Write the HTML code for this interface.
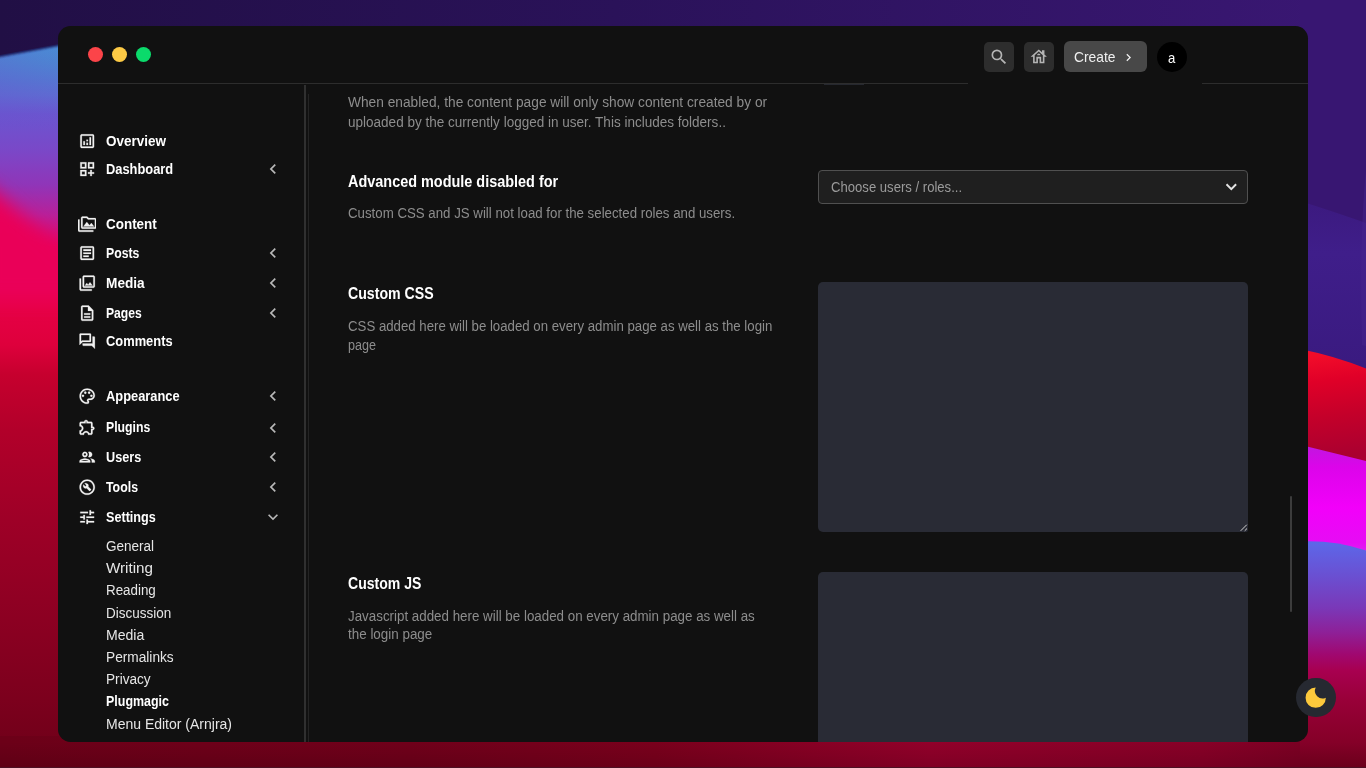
<!DOCTYPE html>
<html lang="en">
<head>
<meta charset="utf-8">
<title>Plugmagic Settings</title>
<style>
html,body{margin:0;padding:0;width:1366px;height:768px;overflow:hidden;background:#7a0020;}
body{position:relative;font-family:"Liberation Sans",sans-serif;}
#bg{position:absolute;left:0;top:0;width:1366px;height:768px;display:block;}
#win{position:absolute;left:58px;top:26px;width:1250px;height:716px;background:#111111;border-radius:12.500px;overflow:hidden;}
#page{position:absolute;left:-58px;top:-26px;width:1366px;height:768px;}
.abs{position:absolute;}
.t{position:absolute;white-space:nowrap;line-height:20px;height:20px;transform-origin:0 50%;display:block;}
.ic{position:absolute;display:block;}
.dot{position:absolute;width:15.4px;height:15.4px;border-radius:50%;top:46.8px;}
.btn{position:absolute;border-radius:5px;}
.ta{position:absolute;left:818px;width:430px;background:#292b35;border-radius:5px;}
</style>
</head>
<body>
<svg id="bg" width="1366" height="768" viewBox="0 0 1366 768">
<defs>
<linearGradient id="gl" x1="0" y1="0" x2="0" y2="768" gradientUnits="userSpaceOnUse">
<stop offset="0.058" stop-color="#4890d6"/><stop offset="0.081" stop-color="#4c86d2"/><stop offset="0.104" stop-color="#5478d2"/><stop offset="0.124" stop-color="#5e6cd2"/><stop offset="0.148" stop-color="#6a56d0"/>
<stop offset="0.195" stop-color="#7a48c8"/><stop offset="0.241" stop-color="#9035b8"/><stop offset="0.28" stop-color="#b8209a"/>
<stop offset="0.322" stop-color="#e80060"/><stop offset="0.39" stop-color="#e80048"/><stop offset="0.449" stop-color="#de003c"/>
<stop offset="0.488" stop-color="#c6002e"/><stop offset="0.56" stop-color="#b2002a"/><stop offset="0.677" stop-color="#9e0027"/>
<stop offset="0.807" stop-color="#8c0022"/><stop offset="0.911" stop-color="#7c001d"/><stop offset="1" stop-color="#6c0018"/>
</linearGradient>
<linearGradient id="gt" x1="0" y1="0" x2="1366" y2="0" gradientUnits="userSpaceOnUse">
<stop offset="0" stop-color="#210f45"/><stop offset="0.45" stop-color="#2a1259"/><stop offset="1" stop-color="#3a1774"/>
</linearGradient>
<linearGradient id="gr1" x1="1330" y1="354" x2="1343" y2="456" gradientUnits="userSpaceOnUse">
<stop offset="0" stop-color="#f20c2a"/><stop offset="0.25" stop-color="#e00028"/><stop offset="0.6" stop-color="#c4002a"/><stop offset="1" stop-color="#aa0030"/>
</linearGradient>
<linearGradient id="gr2" x1="0" y1="444" x2="0" y2="560" gradientUnits="userSpaceOnUse">
<stop offset="0" stop-color="#be18de"/><stop offset="0.2" stop-color="#dc04ea"/><stop offset="0.55" stop-color="#f200fa"/><stop offset="0.85" stop-color="#e60cf4"/><stop offset="1" stop-color="#d830f0"/>
</linearGradient>
<linearGradient id="gr3" x1="0" y1="536" x2="0" y2="768" gradientUnits="userSpaceOnUse">
<stop offset="0.02" stop-color="#5c68ea"/><stop offset="0.17" stop-color="#6a50d2"/><stop offset="0.31" stop-color="#7a38b8"/><stop offset="0.415" stop-color="#8e2098"/>
<stop offset="0.51" stop-color="#a00870"/><stop offset="0.58" stop-color="#a80050"/><stop offset="0.71" stop-color="#980038"/><stop offset="0.84" stop-color="#8a002c"/><stop offset="1" stop-color="#7a001f"/>
</linearGradient>
<linearGradient id="gb" x1="0" y1="0" x2="1366" y2="0" gradientUnits="userSpaceOnUse">
<stop offset="0" stop-color="#6c0018"/><stop offset="0.3" stop-color="#70001a"/><stop offset="0.48" stop-color="#7a001c"/><stop offset="0.68" stop-color="#92002a"/><stop offset="0.88" stop-color="#880027"/><stop offset="1" stop-color="#740020"/>
</linearGradient>
<linearGradient id="gbl" x1="0" y1="0" x2="80" y2="0" gradientUnits="userSpaceOnUse">
<stop offset="0" stop-color="#6a50cc" stop-opacity="0.22"/><stop offset="1" stop-color="#6a50cc" stop-opacity="0"/>
</linearGradient>
<linearGradient id="gp" x1="0" y1="205" x2="0" y2="365" gradientUnits="userSpaceOnUse"><stop offset="0" stop-color="#3c1a80"/><stop offset="0.3" stop-color="#3f1e8a"/><stop offset="1" stop-color="#3a1a80"/></linearGradient>
<linearGradient id="gbd" x1="0" y1="742" x2="0" y2="768" gradientUnits="userSpaceOnUse"><stop offset="0" stop-color="#000" stop-opacity="0"/><stop offset="1" stop-color="#000" stop-opacity="0.13"/></linearGradient>
<filter id="bl" x="-50%" y="-50%" width="200%" height="200%"><feGaussianBlur stdDeviation="9"/></filter>
<filter id="bl2" x="-10%" y="-50%" width="120%" height="200%"><feGaussianBlur stdDeviation="1.100"/></filter>
</defs>
<rect x="0" y="0" width="1366" height="768" fill="url(#gl)"/>
<rect x="0" y="40" width="80" height="90" fill="url(#gbl)"/>
<polygon points="-20,178 -20,300 90,300 90,274" fill="#ea0058" filter="url(#bl)"/>
<rect x="0" y="736" width="1366" height="32" fill="url(#gb)"/>
<polygon points="-10,-10 1376,-10 1376,40 80,40 -10,57" fill="#1d1a5a" filter="url(#bl2)" transform="translate(0,2)"/>
<polygon points="0,0 1366,0 1366,40 80,40 0,55" fill="url(#gt)"/>
<rect x="1300" y="0" width="66" height="768" fill="#381672"/>
<path d="M1300,201 Q1335,212 1366,223 L1366,372 L1300,372 Z" fill="url(#gp)"/>
<path d="M1366,170 Q1359,240 1362,345 L1366,346 Z" fill="#46268e" opacity="0.450"/>
<path d="M1300,349 Q1335,356 1366,368.500 L1366,462 L1300,445 Z" fill="url(#gr1)"/>
<polygon points="1300,444.700 1366,461 1366,570 1300,570" fill="url(#gr2)"/>
<path d="M1300,541.500 Q1335,540 1366,550.600 L1366,768 L1300,768 Z" fill="url(#gr3)"/>
<rect x="0" y="742" width="1366" height="26" fill="url(#gbd)"/>
<rect x="0" y="767" width="1366" height="1" fill="#4e1024"/>
</svg>

<div id="win"><div id="page">
<!-- header -->
<div class="abs" style="left:58px;top:83px;width:1250px;height:1px;background:#2d2d2d"></div>
<div class="abs" style="left:968px;top:80px;width:234px;height:8px;background:#111111"></div>
<div class="dot" style="left:87.8px;background:#fb4449"></div>
<div class="dot" style="left:111.8px;background:#fdca45"></div>
<div class="dot" style="left:135.8px;background:#0bda6b"></div>
<div class="btn" style="left:984px;top:42px;width:30px;height:30px;background:#2d2d2d"></div>
<div class="btn" style="left:1024px;top:42px;width:30px;height:30px;background:#2d2d2d"></div>
<div class="btn" style="left:1064px;top:41px;width:83px;height:31px;background:#484848;border-radius:6px"></div>
<div class="abs" style="left:1157px;top:42px;width:30px;height:30px;border-radius:50%;background:#000"></div>
<svg class="ic" style="left:988.60px;top:46.90px;width:20px;height:20px;fill:#b4b4b4;" viewBox="0 0 24 24"><path d="M15.500 14h-.79l-.28-.27A6.471 6.471 0 0 0 16 9.500 6.500 6.500 0 1 0 9.500 16c1.610 0 3.090-.59 4.230-1.570l.27.280v.79l5 4.990L20.490 19l-4.990-5zm-6 0C7.010 14 5 11.990 5 9.500S7.010 5 9.500 5 14 7.010 14 9.500 11.990 14 9.500 14z"/></svg>
<svg class="ic" style="left:1029.25px;top:46.85px;width:19.5px;height:19.5px;fill:#b4b4b4;" viewBox="0 0 24 24"><path d="M19 9.300V4h-3v2.600L12 3 2 12h3v8h6v-6h2v6h6v-8h3l-3-2.700zM17 18h-2v-6H9v6H7v-7.810l5-4.500 5 4.500V18z"/><path d="M10 10h4c0-1.100-.9-2-2-2s-2 .9-2 2z"/></svg>
<svg class="ic" style="left:1121.30px;top:49.70px;width:15px;height:15px;fill:#f0f0f0;" viewBox="0 0 24 24"><path d="M10 6L8.590 7.410 13.170 12l-4.580 4.590L10 18l6-6z"/></svg>
<div class="abs" style="left:824px;top:84px;width:40px;height:1px;background:#26282f"></div>
<!-- sidebar -->
<div class="abs" style="left:304px;top:85px;width:2px;height:660px;background:#303030"></div>
<div class="abs" style="left:308px;top:94px;width:1px;height:650px;background:#242424"></div>
<svg class="ic" style="left:77.90px;top:131.60px;width:18.4px;height:18.4px;fill:#f2f2f2;stroke:#f2f2f2;stroke-width:.3;" viewBox="0 0 24 24"><path d="M19 3H5c-1.1 0-2 .9-2 2v14c0 1.1.9 2 2 2h14c1.1 0 2-.9 2-2V5c0-1.1-.9-2-2-2zm0 16H5V5h14v14zM7 12h2v5H7zm8-5h2v10h-2zm-4 7h2v3h-2zm0-4h2v2h-2z"/></svg><svg class="ic" style="left:77.90px;top:160.00px;width:18.4px;height:18.4px;fill:#f2f2f2;stroke:#f2f2f2;stroke-width:.3;" viewBox="0 0 24 24"><path d="M3 11h8V3H3v8zm2-6h4v4H5V5zm8-2v8h8V3h-8zm6 6h-4V5h4v4zM3 21h8v-8H3v8zm2-6h4v4H5v-4zm13-2h-2v3h-3v2h3v3h2v-3h3v-2h-3z"/></svg><svg class="ic" style="left:263.30px;top:159.40px;width:20px;height:20px;fill:#b8b8b8;" viewBox="0 0 24 24"><path d="M15.410 7.410L14 6l-6 6 6 6 1.410-1.410L10.830 12z"/></svg><svg class="ic" style="left:77.90px;top:214.70px;width:18.4px;height:18.4px;fill:#f2f2f2;stroke:#f2f2f2;stroke-width:.3;" viewBox="0 0 24 24"><path d="M2 6H0v5h.01L0 20c0 1.1.9 2 2 2h18v-2H2V6zm5 9h14l-3.5-4.5-2.5 3.01L11.5 9zM22 4h-8l-2-2H6c-1.1 0-1.99.9-1.99 2L4 16c0 1.1.9 2 2 2h16c1.1 0 2-.9 2-2V6c0-1.1-.9-2-2-2zm0 12H6V4h5.17l1.41 1.41.59.59H22v10z"/></svg><svg class="ic" style="left:77.90px;top:243.80px;width:18.4px;height:18.4px;fill:#f2f2f2;stroke:#f2f2f2;stroke-width:.3;" viewBox="0 0 24 24"><path d="M19 5v14H5V5h14m0-2H5c-1.1 0-2 .9-2 2v14c0 1.1.9 2 2 2h14c1.1 0 2-.9 2-2V5c0-1.1-.9-2-2-2z"/><path d="M14 17H7v-2h7v2zm3-4H7v-2h10v2zm0-4H7V7h10v2z"/></svg><svg class="ic" style="left:263.30px;top:243.20px;width:20px;height:20px;fill:#b8b8b8;" viewBox="0 0 24 24"><path d="M15.410 7.410L14 6l-6 6 6 6 1.410-1.410L10.830 12z"/></svg><svg class="ic" style="left:77.90px;top:273.80px;width:18.4px;height:18.4px;fill:#f2f2f2;stroke:#f2f2f2;stroke-width:.3;" viewBox="0 0 24 24"><path d="M20 4v12H8V4h12m0-2H8c-1.1 0-2 .9-2 2v12c0 1.1.9 2 2 2h12c1.1 0 2-.9 2-2V4c0-1.1-.9-2-2-2zm-8.5 9.670l1.690 2.260 2.480-3.100L19 15H9zM2 6v14c0 1.100.9 2 2 2h14v-2H4V6H2z"/></svg><svg class="ic" style="left:263.30px;top:273.20px;width:20px;height:20px;fill:#b8b8b8;" viewBox="0 0 24 24"><path d="M15.410 7.410L14 6l-6 6 6 6 1.410-1.410L10.830 12z"/></svg><svg class="ic" style="left:77.90px;top:303.60px;width:18.4px;height:18.4px;fill:#f2f2f2;stroke:#f2f2f2;stroke-width:.3;" viewBox="0 0 24 24"><path d="M8 16h8v2H8zm0-4h8v2H8zm6-10H6c-1.1 0-2 .9-2 2v16c0 1.100.89 2 1.990 2H18c1.100 0 2-.9 2-2V8l-6-6zm4 18H6V4h7v5h5v11z"/></svg><svg class="ic" style="left:263.30px;top:303.00px;width:20px;height:20px;fill:#b8b8b8;" viewBox="0 0 24 24"><path d="M15.410 7.410L14 6l-6 6 6 6 1.410-1.410L10.830 12z"/></svg><svg class="ic" style="left:77.90px;top:331.80px;width:18.4px;height:18.4px;fill:#f2f2f2;stroke:#f2f2f2;stroke-width:.3;" viewBox="0 0 24 24"><path d="M15 4v7H5.170L4 12.170V4h11m1-2H3c-.55 0-1 .45-1 1v14l4-4h10c.55 0 1-.45 1-1V3c0-.55-.45-1-1-1zm5 4h-2v9H6v2c0 .55.45 1 1 1h11l4 4V7c0-.55-.45-1-1-1z"/></svg><svg class="ic" style="left:77.90px;top:386.80px;width:18.4px;height:18.4px;fill:#f2f2f2;stroke:#f2f2f2;stroke-width:.3;" viewBox="0 0 24 24"><path d="M12 22C6.490 22 2 17.510 2 12S6.490 2 12 2s10 4.040 10 9c0 3.310-2.690 6-6 6h-1.770c-.28 0-.5.220-.5.5 0 .120.050.230.130.330.410.470.640 1.060.640 1.670A2.500 2.500 0 0 1 12 22zm0-18c-4.410 0-8 3.590-8 8s3.590 8 8 8c.28 0 .5-.220.5-.5a.54.54 0 0 0-.14-.35c-.41-.46-.63-1.050-.63-1.650a2.500 2.500 0 0 1 2.500-2.500H16c2.210 0 4-1.790 4-4 0-3.860-3.590-7-8-7z"/><circle cx="6.500" cy="11.500" r="1.500"/><circle cx="9.500" cy="7.500" r="1.500"/><circle cx="14.500" cy="7.500" r="1.500"/><circle cx="17.500" cy="11.500" r="1.500"/></svg><svg class="ic" style="left:263.30px;top:386.20px;width:20px;height:20px;fill:#b8b8b8;" viewBox="0 0 24 24"><path d="M15.410 7.410L14 6l-6 6 6 6 1.410-1.410L10.830 12z"/></svg><svg class="ic" style="left:77.90px;top:418.10px;width:18.4px;height:18.4px;fill:#f2f2f2;stroke:#f2f2f2;stroke-width:.3;" viewBox="0 0 24 24"><path d="M10.500 4.500c.28 0 .5.220.5.5v2h6v6h2c.28 0 .5.220.5.5s-.22.5-.5.5h-2v6h-2.120c-.68-1.750-2.390-3-4.380-3s-3.700 1.250-4.380 3H4v-2.120c1.750-.68 3-2.390 3-4.380 0-1.990-1.240-3.700-2.990-4.380L4 7h6V5c0-.28.220-.5.5-.5m0-2C9.120 2.500 8 3.620 8 5H4c-1.100 0-1.990.9-1.990 2v3.800h.29c1.490 0 2.700 1.210 2.700 2.700s-1.210 2.700-2.700 2.700H2V20c0 1.100.9 2 2 2h3.800v-.3c0-1.490 1.210-2.700 2.700-2.700s2.700 1.210 2.700 2.700v.3H17c1.100 0 2-.9 2-2v-4c1.380 0 2.500-1.120 2.500-2.500S20.380 11 19 11V7c0-1.100-.9-2-2-2h-4c0-1.380-1.120-2.500-2.500-2.500z"/></svg><svg class="ic" style="left:263.30px;top:417.50px;width:20px;height:20px;fill:#b8b8b8;" viewBox="0 0 24 24"><path d="M15.410 7.410L14 6l-6 6 6 6 1.410-1.410L10.830 12z"/></svg><svg class="ic" style="left:77.90px;top:448.00px;width:18.4px;height:18.4px;fill:#f2f2f2;stroke:#f2f2f2;stroke-width:.3;" viewBox="0 0 24 24"><path d="M9 13.750c-2.340 0-7 1.170-7 3.500V19h14v-1.750c0-2.330-4.660-3.500-7-3.500zM4.340 17c.84-.58 2.870-1.250 4.660-1.250s3.820.67 4.660 1.250H4.340zM9 12c1.930 0 3.500-1.570 3.500-3.500S10.930 5 9 5 5.500 6.570 5.500 8.500 7.070 12 9 12zm0-5c.83 0 1.500.67 1.500 1.500S9.830 10 9 10s-1.500-.67-1.500-1.500S8.170 7 9 7zm7.040 6.810c1.160.84 1.960 1.960 1.960 3.440V19h4v-1.750c0-2.020-3.500-3.170-5.960-3.440zM15 12c1.930 0 3.500-1.570 3.500-3.500S16.930 5 15 5c-.54 0-1.040.13-1.500.35.63.89 1 1.980 1 3.150s-.37 2.260-1 3.150c.46.220.96.350 1.500.350z"/></svg><svg class="ic" style="left:263.30px;top:447.40px;width:20px;height:20px;fill:#b8b8b8;" viewBox="0 0 24 24"><path d="M15.410 7.410L14 6l-6 6 6 6 1.410-1.410L10.830 12z"/></svg><svg class="ic" style="left:77.90px;top:478.00px;width:18.4px;height:18.4px;fill:#f2f2f2;stroke:#f2f2f2;stroke-width:.3;" viewBox="0 0 24 24"><path d="M12 2C6.480 2 2 6.480 2 12s4.480 10 10 10 10-4.480 10-10S17.520 2 12 2zm0 18c-4.410 0-8-3.590-8-8s3.590-8 8-8 8 3.590 8 8-3.590 8-8 8z"/><path d="M13.490 11.380c.43-1.220.17-2.640-.81-3.620-1.110-1.110-2.790-1.300-4.100-.59l2.350 2.350-1.410 1.410-2.350-2.350c-.71 1.320-.52 2.990.59 4.100.98.980 2.400 1.240 3.620.81l3.410 3.410c.2.200.51.200.71 0l1.400-1.400c.2-.2.200-.51 0-.71l-3.410-3.410z"/></svg><svg class="ic" style="left:263.30px;top:477.40px;width:20px;height:20px;fill:#b8b8b8;" viewBox="0 0 24 24"><path d="M15.410 7.410L14 6l-6 6 6 6 1.410-1.410L10.830 12z"/></svg><svg class="ic" style="left:77.90px;top:508.00px;width:18.4px;height:18.4px;fill:#f2f2f2;stroke:#f2f2f2;stroke-width:.3;" viewBox="0 0 24 24"><path d="M3 17v2h6v-2H3zM3 5v2h10V5H3zm10 16v-2h8v-2h-8v-2h-2v6h2zM7 9v2H3v2h4v2h2V9H7zm14 4v-2H11v2h10zm-6-4h2V7h4V5h-4V3h-2v6z"/></svg><svg class="ic" style="left:263.20px;top:506.60px;width:20px;height:20px;fill:#b8b8b8;" viewBox="0 0 24 24"><path d="M16.590 8.590L12 13.170 7.410 8.590 6 10l6 6 6-6z"/></svg>
<!-- main -->
<div class="abs" style="left:818px;top:170px;width:428px;height:32px;border:1px solid #505050;background:#1f1f1f;border-radius:4px"></div>
<svg class="ic" style="left:1223px;top:179px;width:16px;height:16px" viewBox="0 0 16 16"><path d="M3.500 5.300 L8.300 10.100 L13.100 5.300" fill="none" stroke="#e2e2e2" stroke-width="2"/></svg>
<div class="ta" style="top:282px;height:250px;border-radius:5px 5px 2px 5px"></div>
<svg class="ic" style="left:1236px;top:520px;width:12px;height:12px" viewBox="0 0 12 12"><path d="M10.800 4.700L4.700 10.800M11 8.500L8.700 10.800" stroke="#d4d4d4" stroke-width="1" fill="none"/></svg>
<div class="ta" style="top:572px;height:200px"></div>
<div class="abs" style="left:1290px;top:496px;width:2px;height:116px;background:#3c3c3c;border-radius:1px"></div>
<span id="t0" class="t" style="left:106.2px;top:130.74px;font-size:14.6px;font-weight:700;color:#ffffff;transform:scaleX(0.9260)">Overview</span><span id="t1" class="t" style="left:106.2px;top:158.94px;font-size:14.6px;font-weight:700;color:#ffffff;transform:scaleX(0.8815)">Dashboard</span><span id="t2" class="t" style="left:106.2px;top:213.94px;font-size:14.6px;font-weight:700;color:#ffffff;transform:scaleX(0.9215)">Content</span><span id="t3" class="t" style="left:106.2px;top:242.94px;font-size:14.6px;font-weight:700;color:#ffffff;transform:scaleX(0.8403)">Posts</span><span id="t4" class="t" style="left:106.2px;top:272.84px;font-size:14.6px;font-weight:700;color:#ffffff;transform:scaleX(0.9357)">Media</span><span id="t5" class="t" style="left:106.2px;top:302.64px;font-size:14.6px;font-weight:700;color:#ffffff;transform:scaleX(0.8326)">Pages</span><span id="t6" class="t" style="left:106.2px;top:330.84px;font-size:14.6px;font-weight:700;color:#ffffff;transform:scaleX(0.8830)">Comments</span><span id="t7" class="t" style="left:106.2px;top:385.94px;font-size:14.6px;font-weight:700;color:#ffffff;transform:scaleX(0.8809)">Appearance</span><span id="t8" class="t" style="left:106.2px;top:416.74px;font-size:14.6px;font-weight:700;color:#ffffff;transform:scaleX(0.8406)">Plugins</span><span id="t9" class="t" style="left:106.2px;top:446.74px;font-size:14.6px;font-weight:700;color:#ffffff;transform:scaleX(0.8699)">Users</span><span id="t10" class="t" style="left:106.2px;top:476.74px;font-size:14.6px;font-weight:700;color:#ffffff;transform:scaleX(0.8456)">Tools</span><span id="t11" class="t" style="left:106.2px;top:506.74px;font-size:14.6px;font-weight:700;color:#ffffff;transform:scaleX(0.8649)">Settings</span><span id="t12" class="t" style="left:106.3px;top:536.15px;font-size:14px;font-weight:400;color:#e6e6e6;transform:scaleX(0.9656)">General</span><span id="t13" class="t" style="left:106.3px;top:557.95px;font-size:14px;font-weight:400;color:#e6e6e6;transform:scaleX(1.0851)">Writing</span><span id="t14" class="t" style="left:106.3px;top:580.45px;font-size:14px;font-weight:400;color:#e6e6e6;transform:scaleX(0.9548)">Reading</span><span id="t15" class="t" style="left:106.3px;top:602.75px;font-size:14px;font-weight:400;color:#e6e6e6;transform:scaleX(0.9630)">Discussion</span><span id="t16" class="t" style="left:106.3px;top:624.75px;font-size:14px;font-weight:400;color:#e6e6e6;transform:scaleX(1.0042)">Media</span><span id="t17" class="t" style="left:106.3px;top:646.85px;font-size:14px;font-weight:400;color:#e6e6e6;transform:scaleX(0.9776)">Permalinks</span><span id="t18" class="t" style="left:106.3px;top:668.75px;font-size:14px;font-weight:400;color:#e6e6e6;transform:scaleX(0.9737)">Privacy</span><span id="t19" class="t" style="left:106.3px;top:691.05px;font-size:14px;font-weight:700;color:#ffffff;transform:scaleX(0.8899)">Plugmagic</span><span id="t20" class="t" style="left:106.3px;top:713.75px;font-size:14px;font-weight:400;color:#e6e6e6;transform:scaleX(0.9996)">Menu Editor (Arnjra)</span><span id="t21" class="t" style="left:348.2px;top:91.55px;font-size:14px;font-weight:400;color:#8d8d8d;transform:scaleX(0.9809)">When enabled, the content page will only show content created by or</span><span id="t22" class="t" style="left:348.2px;top:111.75px;font-size:14px;font-weight:400;color:#8d8d8d;transform:scaleX(0.9660)">uploaded by the currently logged in user. This includes folders..</span><span id="t23" class="t" style="left:348.2px;top:172.26px;font-size:16px;font-weight:700;color:#ffffff;transform:scaleX(0.9024)">Advanced module disabled for</span><span id="t24" class="t" style="left:348.2px;top:202.95px;font-size:14px;font-weight:400;color:#8d8d8d;transform:scaleX(0.9475)">Custom CSS and JS will not load for the selected roles and users.</span><span id="t25" class="t" style="left:348.2px;top:284.26px;font-size:16px;font-weight:700;color:#ffffff;transform:scaleX(0.8844)">Custom CSS</span><span id="t26" class="t" style="left:348.2px;top:315.85px;font-size:14px;font-weight:400;color:#8d8d8d;transform:scaleX(0.9449)">CSS added here will be loaded on every admin page as well as the login</span><span id="t27" class="t" style="left:348.2px;top:334.55px;font-size:14px;font-weight:400;color:#8d8d8d;transform:scaleX(0.8987)">page</span><span id="t28" class="t" style="left:348.2px;top:574.26px;font-size:16px;font-weight:700;color:#ffffff;transform:scaleX(0.8770)">Custom JS</span><span id="t29" class="t" style="left:348.2px;top:605.85px;font-size:14px;font-weight:400;color:#8d8d8d;transform:scaleX(0.9538)">Javascript added here will be loaded on every admin page as well as</span><span id="t30" class="t" style="left:348.2px;top:624.15px;font-size:14px;font-weight:400;color:#8d8d8d;transform:scaleX(0.9583)">the login page</span><span id="t31" class="t" style="left:831.4px;top:177.45px;font-size:14px;font-weight:400;color:#9b9b9b;transform:scaleX(0.9360)">Choose users / roles...</span><span id="t32" class="t" style="left:1074.0px;top:46.74px;font-size:14.6px;font-weight:400;color:#f0f0f0;transform:scaleX(0.9472)">Create</span><span id="t33" class="t" style="left:1168.3px;top:47.60px;font-size:15px;font-weight:400;color:#ffffff;transform:scaleX(0.8749)">a</span>
</div></div>
<div class="abs" style="left:1296.200px;top:678px;width:39.400px;height:39.400px;border-radius:50%;background:#262931"></div>
<svg class="ic" style="left:1296px;top:678px;width:40px;height:40px" viewBox="1296 678 40 40"><path d="M1315.700 687.550A10.150 10.150 0 1 0 1325.850 697.700A7.600 7.600 0 0 1 1315.700 687.550Z" fill="#fcc93c"/></svg>
</body>
</html>
